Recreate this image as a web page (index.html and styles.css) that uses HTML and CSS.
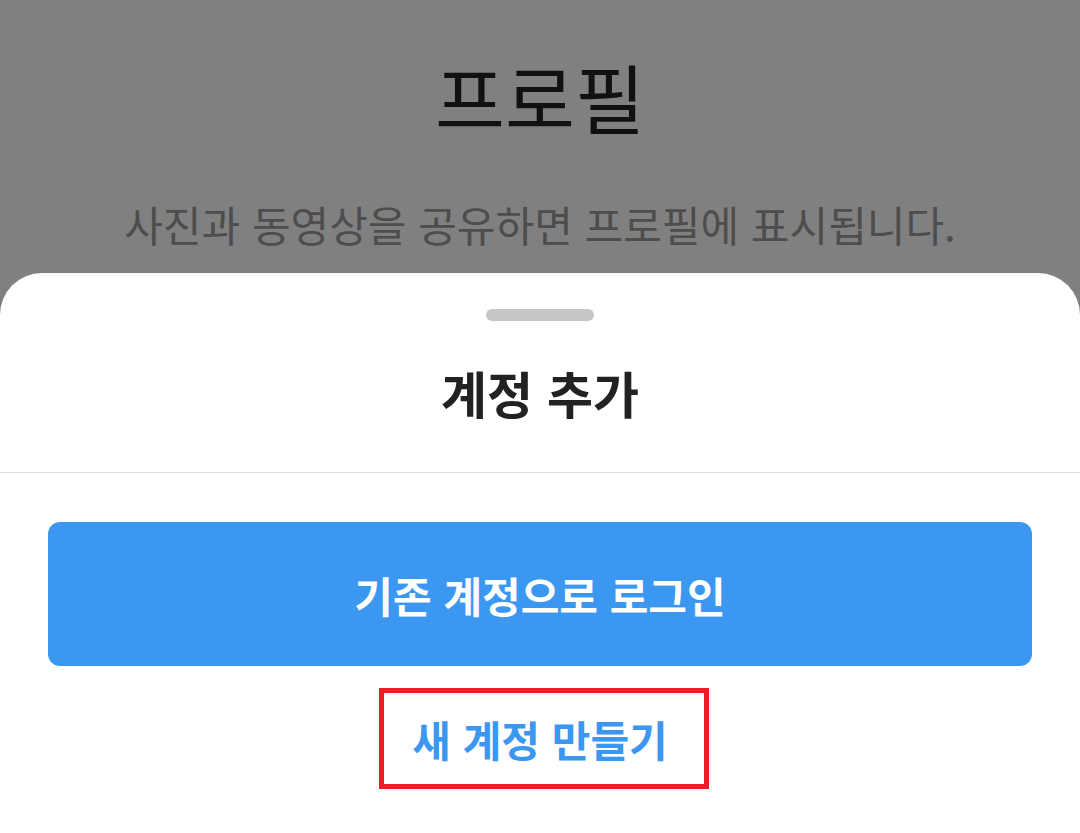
FILE: index.html
```html
<!DOCTYPE html>
<html lang="ko">
<head>
<meta charset="utf-8">
<link rel="stylesheet" href="styles.css">
</head>
<body>
<div class="screen">
  <div class="backdrop">
    <h1 class="page-title">프로필</h1>
    <p class="page-sub">사진과 동영상을 공유하면 프로필에 표시됩니다.</p>
  </div>
  <div class="sheet">
    <div class="sheet-head">
      <div class="handle"></div>
      <h2 class="sheet-title">계정 추가</h2>
    </div>
    <div class="sheet-body">
      <button class="btn-primary">기존 계정으로 로그인</button>
      <div class="link-box"><span class="link">새 계정 만들기</span></div>
    </div>
  </div>
</div>
</body>
</html>
```
FILE: styles.css
```css
html, body {
  margin: 0;
  padding: 0;
}
body {
  width: 1080px;
  height: 833px;
  overflow: hidden;
  background: #808080;
  font-family: "Noto Sans CJK KR", "Noto Sans", sans-serif;
}
.screen {
  display: flex;
  flex-direction: column;
  height: 833px;
}
.backdrop {
  height: 273px;
  display: flex;
  flex-direction: column;
  align-items: center;
  box-sizing: border-box;
  padding-top: 44px;
}
.page-title {
  margin: 0;
  font-size: 76px;
  font-weight: 400;
  line-height: 104px;
  color: #111111;
}
.page-sub {
  margin: 48px 0 0;
  font-size: 42px;
  font-weight: 400;
  line-height: 56px;
  color: #4d4d4d;
}
.sheet {
  flex: 1;
  background: #ffffff;
  border-radius: 42px 42px 0 0;
  display: flex;
  flex-direction: column;
}
.sheet-head {
  display: flex;
  flex-direction: column;
  align-items: center;
  border-bottom: 1px solid #dcdcdc;
  height: 200px;
  box-sizing: border-box;
  padding-top: 36px;
}
.handle {
  width: 108px;
  height: 12px;
  border-radius: 6px;
  background: #c6c6c6;
}
.sheet-title {
  margin: 36px 0 0;
  font-size: 50px;
  font-weight: 700;
  line-height: 70px;
  color: #222222;
}
.sheet-body {
  display: flex;
  flex-direction: column;
  align-items: center;
  padding: 49px 48px 0;
}
.btn-primary {
  width: 984px;
  height: 144px;
  border: none;
  border-radius: 12px;
  background: #3b97f0;
  color: #ffffff;
  font-family: inherit;
  font-size: 42px;
  font-weight: 700;
  padding: 0;
}
.link-box {
  margin-top: 22px;
  margin-left: 8px;
  width: 330px;
  height: 101px;
  box-sizing: border-box;
  border: 5px solid #ee1c25;
  display: flex;
  align-items: center;
  justify-content: center;
  padding-right: 8px;
}
.link {
  font-size: 42px;
  font-weight: 700;
  color: #3b97f0;
}
```
